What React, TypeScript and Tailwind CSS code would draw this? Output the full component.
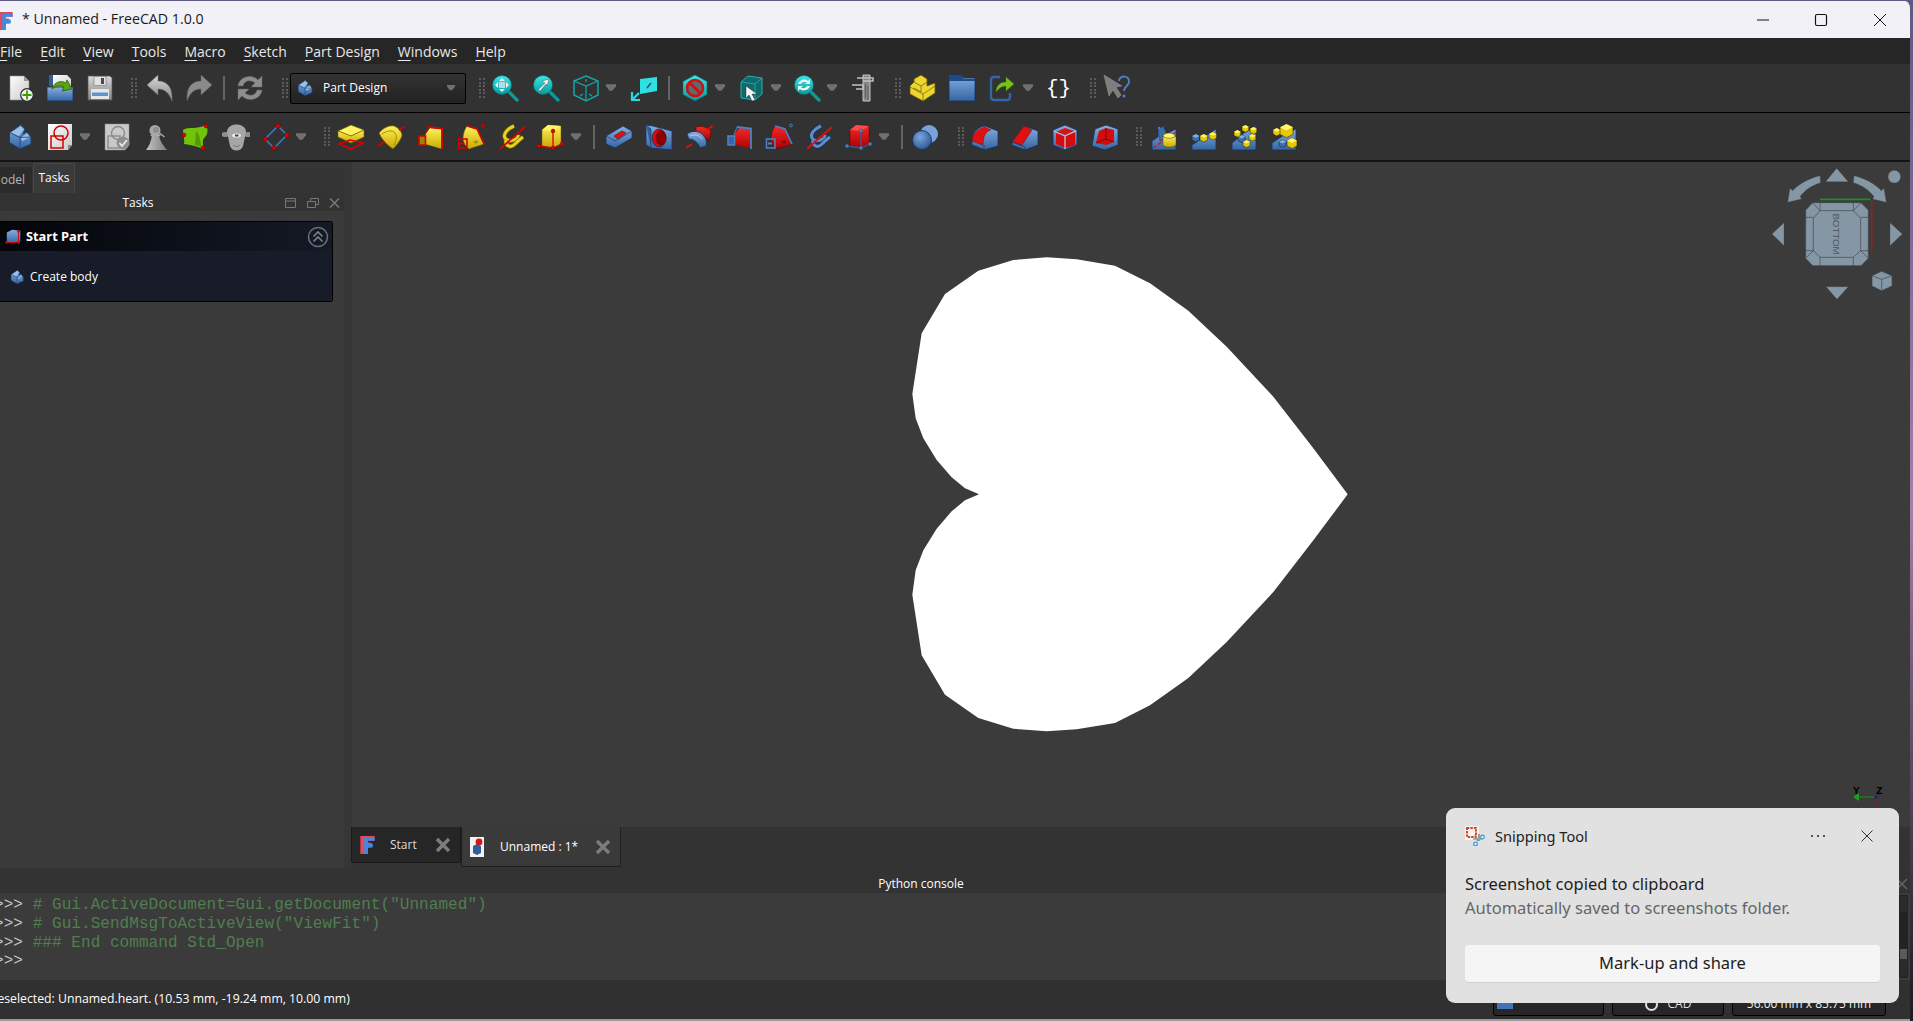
import React from "react";

const ui = { fontFamily: '"Open Sans", "Noto Sans", sans-serif' };

type IconProps = { className?: string; children?: React.ReactNode };

const Ico = ({ className = "", children }: IconProps) => (
  <svg viewBox="0 0 28 28" className={"h-7 w-7 shrink-0 " + className}>
    {children}
  </svg>
);

const Gradients = () => (
  <svg className="absolute h-0 w-0">
    <defs>
      <linearGradient id="gBlue" x1="0" y1="0" x2="0" y2="1">
        <stop offset="0" stopColor="#86aee0" />
        <stop offset="1" stopColor="#3465a4" />
      </linearGradient>
      <linearGradient id="gYellow" x1="0" y1="0" x2="0" y2="1">
        <stop offset="0" stopColor="#fff25c" />
        <stop offset="1" stopColor="#c9a800" />
      </linearGradient>
      <linearGradient id="gRed" x1="0" y1="0" x2="0" y2="1">
        <stop offset="0" stopColor="#f02a2a" />
        <stop offset="1" stopColor="#b00000" />
      </linearGradient>
      <linearGradient id="gPaper" x1="0" y1="0" x2="1" y2="1">
        <stop offset="0" stopColor="#ffffff" />
        <stop offset="1" stopColor="#c8c8c8" />
      </linearGradient>
      <linearGradient id="gGray" x1="0" y1="0" x2="0" y2="1">
        <stop offset="0" stopColor="#d8d8d8" />
        <stop offset="1" stopColor="#858585" />
      </linearGradient>
      <linearGradient id="gPawn" x1="0" y1="0" x2="1" y2="0">
        <stop offset="0" stopColor="#c4c4c4" />
        <stop offset="1" stopColor="#7c7c7c" />
      </linearGradient>
      <linearGradient id="gTeal" x1="0" y1="0" x2="0" y2="1">
        <stop offset="0" stopColor="#3fe6e8" />
        <stop offset="1" stopColor="#0a9a9c" />
      </linearGradient>
      <radialGradient id="gBall" cx="0.4" cy="0.35" r="0.7">
        <stop offset="0" stopColor="#7ba7de" />
        <stop offset="1" stopColor="#2a5590" />
      </radialGradient>
    </defs>
  </svg>
);

const pal = {
  y: { top: "#fff45e", main: "url(#gYellow)", side: "#c9a800", dark: "#6e5c00", line: "#d80000", inner: "#e9d21e" },
  r: { top: "#ff4a4a", main: "url(#gRed)", side: "#9c0000", dark: "#5c0000", line: "#4a80c4", inner: "#e02020" },
  b: { top: "#8ab2e4", main: "url(#gBlue)", side: "#3465a4", dark: "#16305a", line: "#e01010", inner: "#5c8ecb" },
};
type V = { v?: "y" | "r" | "b" };

const Grip = ({ className = "" }: IconProps) => (
  <div className={"grid h-[20px] w-[6px] shrink-0 grid-cols-2 content-between gap-x-[2px] " + className}>
    {Array.from({ length: 12 }).map((_, i) => (
      <div key={i} className="h-[2px] w-[2px] bg-[#5a5a5a]" />
    ))}
  </div>
);

const Sep = ({ className = "" }: IconProps) => <div className={"h-[24px] w-[2px] shrink-0 bg-[#636363] " + className} />;

const Drop = ({ className = "" }: IconProps) => (
  <svg viewBox="0 0 11 8" className={"h-2 w-[10px] shrink-0 " + className}>
    <path d="M0 0H11V2L7 7H4L0 2Z" fill="#707070" />
  </svg>
);

const NewDoc = ({ className }: IconProps) => (
  <Ico className={className}>
    <path d="M3 2H17L22 7V26H3Z" fill="url(#gPaper)" stroke="#8a8a8a" strokeWidth=".6" />
    <path d="M17 2V7H22Z" fill="#9a9a9a" />
    <circle cx="20" cy="21" r="6.3" fill="#f4f4f4" stroke="#2b2b2b" strokeWidth="1.2" />
    <path d="M20 16.5V25.5M15.5 21H24.5" stroke="#3c9a06" strokeWidth="1.8" />
  </Ico>
);

const OpenDoc = ({ className }: IconProps) => (
  <Ico className={className}>
    <path d="M3 1H8V12H3Z" fill="#2f5e9c" />
    <path d="M7 1H21L25 5V15H7Z" fill="url(#gPaper)" />
    <path d="M1 13H27V27H1Z" fill="url(#gBlue)" stroke="#18365f" strokeWidth=".8" />
    <path d="M6 15C8 8 15 6 20 9L21 6L26 15L16 17L18 13C14 11 10 12 6 15Z" fill="#5aa612" stroke="#2c5c05" strokeWidth=".8" />
  </Ico>
);

const Save = ({ className }: IconProps) => (
  <Ico className={className}>
    <path d="M2 2H24L26 4V26H2Z" fill="url(#gGray)" stroke="#5a5a5a" strokeWidth=".7" />
    <rect x="8" y="2.5" width="12" height="9" fill="#e2e2e2" stroke="#666" strokeWidth=".5" />
    <rect x="15" y="4" width="3" height="6" fill="#4a4a4a" />
    <rect x="5" y="15" width="18" height="10" fill="#e6e6e6" />
    <rect x="6" y="18.5" width="16" height="3.5" fill="#5f93cc" />
  </Ico>
);

const Undo = ({ className }: IconProps) => (
  <Ico className={className}>
    <path d="M1 11L12 1V7C21 7 27 13 26 27C23 19 19 15 12 15V21Z" fill="url(#gGray)" stroke="#6f6f6f" strokeWidth=".5" />
  </Ico>
);

const Redo = ({ className }: IconProps) => (
  <Ico className={className}>
    <path d="M27 11L16 1V7C7 7 1 13 2 27C5 19 9 15 16 15V21Z" fill="#8a8a8a" stroke="#5f5f5f" strokeWidth=".5" />
  </Ico>
);

const Refresh = ({ className }: IconProps) => (
  <Ico className={className}>
    <path d="M2 12C3 3 15 -1 22 6L26 2V13H15L19 9C14 5 8 7 7 12Z" fill="#8d8d8d" stroke="#666" strokeWidth=".5" />
    <path d="M26 16C25 25 13 29 6 22L2 26V15H13L9 19C14 23 20 21 21 16Z" fill="#8d8d8d" stroke="#666" strokeWidth=".5" />
  </Ico>
);

const Body = ({ className }: IconProps) => (
  <Ico className={className}>
    <path d="M3.5 9.5L9 6L14.5 2L19 6L17 11L21 9L25 14V21L14 26L3.5 19.5Z" fill="url(#gBlue)" stroke="#1c3f70" strokeWidth="1" />
    <path d="M5 9.5L14.5 3.5L17.5 6.5L13 13Z" fill="#9cc0ea" />
    <path d="M14.5 15L21 10.5L24 14L16.5 18Z" fill="#9cc0ea" />
    <path d="M3.5 9.5L14 14.5V26M14 14.5L17 11M14 14.5L25 14" fill="none" stroke="#1c3f70" strokeWidth=".8" />
  </Ico>
);

const Sketch = ({ className }: IconProps) => (
  <Ico className={className}>
    <path d="M2 1H26V22L22 27H2Z" fill="url(#gPaper)" />
    <path d="M26 22H22V27Z" fill="#8a8a8a" />
    <rect x="5" y="13" width="12" height="12" fill="none" stroke="#d40000" strokeWidth="1.5" />
    <circle cx="15" cy="10" r="7" fill="none" stroke="#d40000" strokeWidth="1.5" />
  </Ico>
);

const Attach = ({ className }: IconProps) => (
  <Ico className={className}>
    <path d="M2 1H26V22L22 27H2Z" fill="#c9c9c9" stroke="#8f8f8f" strokeWidth=".5" />
    <rect x="5" y="13" width="12" height="12" fill="none" stroke="#8b8b8b" strokeWidth="1.4" />
    <circle cx="15" cy="10" r="6.5" fill="none" stroke="#8b8b8b" strokeWidth="1.4" />
    <circle cx="20" cy="20" r="6.5" fill="#8f8f8f" />
    <path d="M16.5 20L19 23L24 17" fill="none" stroke="#efefef" strokeWidth="1.6" />
  </Ico>
);

const Pawn = ({ className }: IconProps) => (
  <Ico className={className}>
    <path d="M11 12H18C19 19 23 23 26 27H5C8 23 10 19 11 12Z" fill="url(#gPawn)" />
    <rect x="9.5" y="11.5" width="10" height="1.8" rx=".8" fill="#b0b0b0" />
    <circle cx="14" cy="7.5" r="5.5" fill="#a8a8a8" />
    <circle cx="15" cy="7" r="3" fill="#8e8e8e" />
    <path d="M18.5 10L23.5 14" stroke="#a8a8a8" strokeWidth="1.6" />
  </Ico>
);

const GreenFace = ({ className }: IconProps) => (
  <Ico className={className}>
    <path d="M1 7C7 3 14 7 24 2C27 8 25 12 23 14C19 18 22 21 21 26C14 23 9 22 2 21C3 17 1 13 1 7Z" fill="#70c40c" />
    <path d="M14 8C19 12 17 20 21 25C18 23 15 22 13 22Z" fill="#549a08" />
    <circle cx="24" cy="3" r="2" fill="#e00000" stroke="#5c0000" strokeWidth=".4" />
    <circle cx="2" cy="12" r="2" fill="#e00000" stroke="#5c0000" strokeWidth=".4" />
    <circle cx="21" cy="25" r="2" fill="#e00000" stroke="#5c0000" strokeWidth=".4" />
  </Ico>
);

const Sheep = ({ className }: IconProps) => (
  <Ico className={className}>
    <ellipse cx="3" cy="11.5" rx="3.5" ry="2.6" fill="#8f8f8f" />
    <ellipse cx="26" cy="11.5" rx="3.5" ry="2.6" fill="#8f8f8f" />
    <path d="M5 9C5 -1 24 -1 24 9L21 23C19 29 10 29 8 23Z" fill="#a6a6a6" />
    <ellipse cx="14.5" cy="12.5" rx="4.5" ry="2" fill="#ececec" />
    <rect x="13" y="11.5" width="3.5" height="2" fill="#444" />
    <path d="M11 22C13 24 16 24 18 22" fill="none" stroke="#767676" />
  </Ico>
);

const Diamond = ({ className }: IconProps) => (
  <Ico className={className}>
    <path d="M17 3L26 12L13 25L4 16Z" fill="none" stroke="#3f74b5" strokeWidth="1.6" />
    {[[17, 3], [26, 12], [13, 25], [4, 16]].map(([x, y]) => (
      <circle key={x} cx={x} cy={y} r="2.2" fill="#e00000" stroke="#5c0000" strokeWidth=".4" />
    ))}
  </Ico>
);

const PadIco = ({ className }: IconProps) => (
  <Ico className={className}>
    <path d="M1 8L14 2L27 7L14 13Z" fill="#fff45e" stroke="#6e5c00" strokeWidth=".6" />
    <path d="M1 8L14 13L27 7V14L14 20L1 14Z" fill="url(#gYellow)" stroke="#6e5c00" strokeWidth=".6" />
    <path d="M2 21L13 17L26 20L14 26Z" fill="none" stroke="#d80000" strokeWidth="1.6" />
  </Ico>
);

const Revolve = ({ className }: IconProps) => (
  <Ico className={className}>
    <path d="M2 10C6 5 12 2 17 3C22 5 25 9 25 13C23 18 20 22 16 26C10 22 5 17 2 10Z" fill="url(#gYellow)" stroke="#6e5c00" strokeWidth=".7" />
    <path d="M5 11C9 8 14 7 17 9C20 11 20 17 17 22" fill="none" stroke="#a88f00" strokeWidth="1" />
    <path d="M1 23L7.5 18.5M22 7L27.5 3.5" stroke="#d80000" strokeWidth="1.6" />
  </Ico>
);

const Groove = ({ className }: IconProps) => (
  <Ico className={className}>
    <path d="M11 4C16 2 22 4 26 8C26 12 25 15 23 18C20 13 16 11 11 10Z" fill="url(#gRed)" stroke="#5c0000" strokeWidth=".6" />
    <path d="M2 11C8 7 14 8 18 12C21 15 22 19 21 23L15 25C13 19 8 16 4 16Z" fill="url(#gBlue)" stroke="#16305a" strokeWidth=".7" />
    <path d="M5 13C10 11 14 12 17 16" fill="none" stroke="#b8d0ee" strokeWidth="1" />
    <path d="M1 25L7 21M22 7L27.5 3" stroke="#e01010" strokeWidth="1.6" />
  </Ico>
);

const Loft = ({ className, v = "y" }: IconProps & V) => {
  const p = pal[v];
  return (
    <Ico className={className}>
      <path d="M8 12L13 5L25 6V26L8 21Z" fill={p.main} />
      <path d="M11 4L25 5.5V26" fill="none" stroke={p.line} strokeWidth="1.8" />
      <rect x="2" y="13" width="6.5" height="9" fill={v === "y" ? "#9a8400" : "#3465a4"} stroke={p.line} strokeWidth="1.6" />
      <path d="M11 4L8 12" stroke={p.line} strokeWidth="1" />
    </Ico>
  );
};

const Pipe = ({ className, v = "y" }: IconProps & V) => {
  const p = pal[v];
  return (
    <Ico className={className}>
      <path d="M6 17C6 10 8 6 10 3L20 6L27 21L12 26L8 22Z" fill={p.main} stroke={p.dark} strokeWidth=".5" />
      <path d="M10 3L20 6L27 21" fill="none" stroke={p.line} strokeWidth="1.7" />
      <rect x="1.5" y="16" width="8.5" height="9" fill="none" stroke={p.line} strokeWidth="1.6" />
      <rect x="3" y="19.5" width="4" height="2" fill={p.line} />
      <circle cx="26" cy="2.5" r="1.4" fill="none" stroke={p.line} />
      <ellipse cx="19" cy="19" rx="2.4" ry="1.4" fill={p.dark} opacity=".45" />
    </Ico>
  );
};

const Helix = ({ className, v = "y" }: IconProps & V) => {
  const p = pal[v];
  return (
    <Ico className={className}>
      <path d="M16 3C9 6 5 11 7 15C10 20 21 17 20 12" fill="none" stroke={p.dark} strokeWidth="4.5" />
      <path d="M16 3C9 6 5 11 7 15C10 20 21 17 20 12" fill="none" stroke={p.inner} strokeWidth="3" />
      <path d="M8 17C7 22 12 26 17 21C20 18 22 16 25 14" fill="none" stroke={p.dark} strokeWidth="4.5" />
      <path d="M8 17C7 22 12 26 17 21C20 18 22 16 25 14" fill="none" stroke={p.inner} strokeWidth="3" />
      <path d="M2 26L27 4" stroke={v === "y" ? "#d80000" : "#e01010"} strokeWidth="1.7" />
    </Ico>
  );
};

const Prim = ({ className, v = "y" }: IconProps & V) => {
  const p = pal[v];
  const dot = v === "y" ? "#e00000" : "#4a80c4";
  return (
    <Ico className={className}>
      <path d="M5 7L11 2L24 3L24 21L16 25L5 23Z" fill={p.main} stroke={p.dark} strokeWidth=".5" />
      <path d="M5 7L11 2L24 3L16 8Z" fill={p.top} />
      <path d="M16 8V25M2 23L16 25L25 21" fill="none" stroke={v === "y" ? "#d80000" : "#2f5e9c"} strokeWidth="1.3" />
      {[[16, 8], [2, 23], [16, 25], [25, 21]].map(([x, y], i) => (
        <circle key={i} cx={x} cy={y} r="2" fill={dot} stroke="#3a0000" strokeWidth=".3" />
      ))}
    </Ico>
  );
};

const Pocket = ({ className }: IconProps) => (
  <Ico className={className}>
    <path d="M1 13L18 3L27 8L27 15L10 25L1 21Z" fill="url(#gBlue)" stroke="#16305a" strokeWidth=".8" />
    <path d="M1 13L10 18L27 8" fill="none" stroke="#16305a" strokeWidth=".6" />
    <path d="M9 13L17 8L21 10L13 16Z" fill="#e01010" stroke="#5c0000" strokeWidth=".5" />
  </Ico>
);

const Hole = ({ className }: IconProps) => (
  <Ico className={className}>
    <path d="M1 2L8 3L27 8V27L6 25L1 22Z" fill="url(#gBlue)" stroke="#16305a" strokeWidth=".8" />
    <path d="M1 2L6 6V25" fill="#2f5e9c" stroke="#16305a" strokeWidth=".6" />
    <ellipse cx="14" cy="15" rx="7" ry="9" fill="#d01010" stroke="#16305a" strokeWidth=".8" />
    <ellipse cx="16" cy="15" rx="5.5" ry="7.5" fill="#8c0000" />
  </Ico>
);

const Boolean = ({ className }: IconProps) => (
  <Ico className={className}>
    <circle cx="18" cy="11" r="9" fill="#79a3da" />
    <circle cx="11" cy="17" r="9.5" fill="url(#gBall)" stroke="#16305a" strokeWidth=".8" />
  </Ico>
);

const Fillet = ({ className }: IconProps) => (
  <Ico className={className}>
    <path d="M1 17C1 8 10 3 14 3L27 8V23L13 27L1 22Z" fill="url(#gBlue)" stroke="#16305a" strokeWidth=".8" />
    <path d="M1 18C1 10 9 5 14 4L20 7C15 8 12 13 12 22Z" fill="#e01010" stroke="#5c0000" strokeWidth=".4" />
    <path d="M1 22L13 27M13 22V27" stroke="#16305a" strokeWidth=".7" />
  </Ico>
);

const Chamfer = ({ className }: IconProps) => (
  <Ico className={className}>
    <path d="M1 19L13 3L27 8V22L14 27L1 22Z" fill="url(#gBlue)" stroke="#16305a" strokeWidth=".8" />
    <path d="M1 19L13 3L21 7L11 22Z" fill="#e01010" stroke="#5c0000" strokeWidth=".4" />
    <path d="M1 19L14 24V27" fill="none" stroke="#16305a" strokeWidth=".7" />
  </Ico>
);

const Draft = ({ className }: IconProps) => (
  <Ico className={className}>
    <path d="M2 7L14 2L26 7V22L14 27L2 22Z" fill="url(#gBlue)" stroke="#16305a" strokeWidth=".8" />
    <path d="M5 10L14 13L24 9V22L14 25L5 21Z" fill="#d40c0c" />
    <path d="M5 9L14 5L23 8L14 12Z" fill="#e01010" />
    <path d="M14 13V26" stroke="#b8d0ee" strokeWidth="1.2" />
    <path d="M3 8L14 13L25 8" fill="none" stroke="#b8d0ee" strokeWidth="1" />
  </Ico>
);

const Thick = ({ className }: IconProps) => (
  <Ico className={className}>
    <path d="M4 6L15 2L27 6V22L14 27L1 23Z" fill="url(#gBlue)" stroke="#16305a" strokeWidth=".8" />
    <path d="M8 8L15 5L23 7V19L15 22L5 20Z" fill="#d40c0c" />
    <path d="M15 5V16L5 20M15 16L23 19" fill="none" stroke="#5c0000" strokeWidth=".7" />
  </Ico>
);

const Cube = ({ x, y, s = 6, c = "y" }: { x: number; y: number; s?: number; c?: "y" | "b" }) => (
  <g>
    <path
      d={`M${x} ${y + s / 2}L${x + s} ${y}L${x + 2 * s} ${y + s / 2}V${y + 1.6 * s}L${x + s} ${y + 2.1 * s}L${x} ${y + 1.6 * s}Z`}
      fill={c === "y" ? "#e6c800" : "#3a6cae"}
      stroke="#1c1c10"
      strokeWidth=".5"
    />
    <path d={`M${x} ${y + s / 2}L${x + s} ${y}L${x + 2 * s} ${y + s / 2}L${x + s} ${y + s}Z`} fill={c === "y" ? "#fff568" : "#86aee0"} />
  </g>
);

const Base = () => <path d="M2 22L14 14L26 6V27H2Z" fill="url(#gBlue)" stroke="#16305a" strokeWidth=".8" />;

const Mirror = ({ className }: IconProps) => (
  <Ico className={className}>
    <path d="M2 18L8 14V3L14 7L16 11L26 6V27H2Z" fill="url(#gBlue)" stroke="#16305a" strokeWidth=".8" />
    <path d="M8 7L13 3L16 9V15L10 18Z" fill="#3a6cae" stroke="#16305a" strokeWidth=".5" />
    <path d="M3 25L26 9" stroke="#e01010" strokeWidth="1.4" strokeDasharray="4 2" />
    <ellipse cx="19" cy="13" rx="6" ry="3" fill="#fff568" stroke="#4a3f00" strokeWidth=".5" />
    <path d="M13 13V22C15 25 23 25 26 22V13C23 16 15 16 13 13Z" fill="url(#gYellow)" stroke="#4a3f00" strokeWidth=".5" />
  </Ico>
);

const Linear = ({ className }: IconProps) => (
  <Ico className={className}>
    <Base />
    <Cube x={2} y={11} s={3.8} c="b" />
    <Cube x={10} y={11} s={3.8} />
    <Cube x={19} y={9} s={3.8} />
  </Ico>
);

const Polar = ({ className }: IconProps) => (
  <Ico className={className}>
    <path d="M2 20L14 10L26 3V27H2Z" fill="url(#gBlue)" stroke="#16305a" strokeWidth=".8" />
    <Cube x={8} y={12} s={3.6} c="b" />
    <Cube x={4} y={7} s={3.4} />
    <Cube x={12} y={2} s={3.4} />
    <Cube x={20} y={4} s={3.4} />
    <Cube x={19} y={11} s={3.4} />
    <Cube x={13} y={17} s={3.6} />
  </Ico>
);

const Multi = ({ className }: IconProps) => (
  <Ico className={className}>
    <path d="M2 20L14 12L26 6V27H2Z" fill="url(#gBlue)" stroke="#16305a" strokeWidth=".8" />
    <Cube x={3} y={5} s={3.8} />
    <Cube x={10} y={1} s={6.5} />
    <Cube x={9} y={17} s={3.6} c="b" />
    <Cube x={17} y={15} s={5} />
  </Ico>
);

const Glass = ({ children, className }: IconProps) => (
  <Ico className={className}>
    <path d="M17 17L26 26" stroke="#0a9a9c" strokeWidth="3.2" strokeLinecap="round" />
    <circle cx="11" cy="11" r="9.5" fill="url(#gTeal)" stroke="#0f6a6c" strokeWidth=".6" />
    {children}
  </Ico>
);

const WireCube = ({ className }: IconProps) => (
  <Ico className={className}>
    <path d="M14 2L26 7V21L14 27L2 21V7Z" fill="none" stroke="#12a7a9" strokeWidth="1.5" />
    <path d="M2 7L14 12L26 7M14 12V27" fill="none" stroke="#12a7a9" strokeWidth="1.2" />
    <path d="M14 5V8M8 22L11 20M20 22L17 20" stroke="#12a7a9" strokeWidth="1.2" />
  </Ico>
);

const ViewIco = ({ className }: IconProps) => (
  <Ico className={className}>
    <path d="M10 5L27 3V17L10 20Z" fill="#2fe0e2" />
    <path d="M17 14L21 9" stroke="#25505a" strokeWidth="1.4" />
    <path d="M9 19L3 25M2 18V26H10" fill="none" stroke="#2fd8da" strokeWidth="2.2" />
  </Ico>
);

const DrawStyle = ({ className }: IconProps) => (
  <Ico className={className}>
    <path d="M14 1L26 7.5V20.5L14 27L2 20.5V7.5Z" fill="url(#gTeal)" stroke="#0f6a6c" strokeWidth=".6" />
    <circle cx="14" cy="14" r="8" fill="#606a6c" stroke="#d01010" strokeWidth="2.6" />
    <path d="M8.5 8.5L19.5 19.5" stroke="#d01010" strokeWidth="2.6" />
  </Ico>
);

const SelCube = ({ className }: IconProps) => (
  <Ico className={className}>
    <path d="M4 8L11 2L25 4V20L18 26L4 24Z" fill="#0f6a6c" stroke="#1fb6b8" strokeWidth="1" />
    <path d="M4 8L18 10L25 4M18 10V26" fill="none" stroke="#1fb6b8" strokeWidth=".8" />
    <path d="M9 12L20 20L15 20L18 26L15 27L12 21L9 24Z" fill="#f4f4f4" stroke="#222" strokeWidth=".4" />
  </Ico>
);

const Caliper = ({ className }: IconProps) => (
  <Ico className={className}>
    <path d="M14 1H21V27H14Z" fill="#858585" stroke="#c4c4c4" strokeWidth="1" />
    <path d="M8 4H24V7H14M3 11H14V15H7" fill="none" stroke="#c0c0c0" strokeWidth="1.5" />
    <path d="M16.5 10V24M19 12V26" stroke="#565656" strokeWidth=".8" />
  </Ico>
);

const YellowPart = ({ className }: IconProps) => (
  <Ico className={className}>
    <path d="M2 12L6 8V5L13 1L19 5V12L27 9V19L15 27L2 20Z" fill="#ecd632" stroke="#6e5c00" strokeWidth=".8" />
    <path d="M6 8L13 12L19 8M13 12V18L6 14M2 13L15 20V27M15 20L27 12" fill="none" stroke="#6e5c00" strokeWidth=".7" />
  </Ico>
);

const Folder = ({ className }: IconProps) => (
  <Ico className={className}>
    <path d="M1 1H13L16 4H27V27H1Z" fill="url(#gBlue)" stroke="#16305a" strokeWidth=".8" />
    <path d="M1 1H13L16 5H27V7H1Z" fill="#1f4a88" />
  </Ico>
);

const LinkIco = ({ className }: IconProps) => (
  <Ico className={className}>
    <path d="M12 3H6C4 3 3 4 3 6V23C3 25 4 26 6 26H19C21 26 22 25 22 23V19" fill="none" stroke="#3465a4" strokeWidth="2.4" />
    <path d="M8 18C8 11 13 8 18 8V3L26 10L18 17V12C14 12 11 14 8 18Z" fill="#76c41a" stroke="#3c7a06" strokeWidth=".5" />
  </Ico>
);

const Whats = ({ className }: IconProps) => (
  <Ico className={className}>
    <path d="M1 1L6 22L10 16L15 24L18 21L13 13L19 12Z" fill="#7e7e7e" stroke="#9a9a9a" strokeWidth=".5" />
    <path d="M16 7C16 1 27 1 26 8C26 12 21 12 21 17" fill="none" stroke="#4a80c4" strokeWidth="2" />
    <circle cx="21" cy="22" r="1.5" fill="#4a80c4" />
  </Ico>
);

const Logo = ({ className = "" }: IconProps) => (
  <svg viewBox="0 0 17 21" className={className}>
    <path d="M1 1H16V6H8V8H12V13H8V20H1Z" fill="#e8465a" />
    <path d="M5 3H16V6H9V9H14V13H9V20H5Z" fill="#3e8ce0" />
  </svg>
);

const MenuItem = ({ first, rest, className = "" }: { first: string; rest: string; className?: string }) => (
  <span className={"shrink-0 text-[#e8e8e8] " + className}>
    <span className="underline decoration-1 underline-offset-[3px]">{first}</span>
    {rest}
  </span>
);

const TabX = () => (
  <svg viewBox="0 0 16 16" className="h-4 w-4 shrink-0">
    <path d="M2 2L14 14M14 2L2 14" stroke="#7c7c7c" strokeWidth="3.4" />
  </svg>
);

const top = [
  [1403, 763], [1300, 625], [1180, 470], [1040, 320], [925, 212], [810, 130], [705, 77], [590, 58], [500, 52], [400, 60],
  [295, 92], [195, 162], [125, 280], [97, 462], [107, 535], [130, 595], [170, 660], [215, 712], [255, 745], [297, 763],
];
const heart = [...top, ...[...top].reverse().slice(1, -1).map(([x, y]) => [x, 1526 - y])].map((p) => p.join(",")).join(" ");

const NavCube = () => (
  <svg viewBox="90 495 405 405" className="absolute left-[1418px] top-[3px] h-[135px] w-[135px]">
    <g fill="#8597a4" stroke="#3d464d" strokeWidth="1">
      <polygon points="290,505 257,545 325,545" />
      <polygon points="258,860 325,860 291,898" />
      <polygon points="132,668 96,702 132,737" />
      <polygon points="450,668 487,702 450,737" />
      <circle cx="463" cy="530" r="19" />
      <path d="M240 527L242 548C215 556 195 570 180 590L185 597L143 607L150 565L158 572C178 550 208 535 240 527Z" />
      <path d="M342 527L340 548C367 556 387 570 402 590L397 597L439 607L432 565L424 572C404 550 374 535 342 527Z" />
      <polygon points="218,608 363,608 385,630 385,775 363,797 218,797 197,775 197,630" strokeWidth="2" />
      <polygon points="240,632 340,632 362,655 362,752 340,772 240,772 220,752 220,655" strokeWidth="2" />
      <path
        d="M240 608V632M340 608V632M197 652H220M362 652H385M197 752H220M362 752H385M240 772V797M340 772V797M218 608L240 632M363 608L340 632M197 775L220 752M385 775L362 752"
        fill="none"
        strokeWidth="2"
      />
      <polygon points="425,814 456,827 456,858 425,872 396,858 396,827" strokeWidth="2" />
      <path d="M396 827L425 838L456 827M425 838V872" fill="none" strokeWidth="2" />
    </g>
    <text
      x="290"
      y="702"
      transform="rotate(90 290 702)"
      textAnchor="middle"
      dominantBaseline="central"
      fontSize="29"
      fill="#4f5b65"
      fontFamily='"Liberation Sans", sans-serif'
    >
      BOTTOM
    </text>
    <path d="M240 598H392" stroke="#1f8f1f" strokeWidth="5" />
    <path d="M395 600V752" stroke="#8f2222" strokeWidth="5" />
    <circle cx="395" cy="597" r="3" fill="#1a2a80" />
  </svg>
);

const Axis = () => (
  <div className="absolute left-[1501px] top-[624px] h-[41px] w-[40px]">
    <span className="absolute left-[0px] top-0 text-[11px] leading-none font-bold text-black" style={{ fontFamily: '"Liberation Mono", monospace' }}>
      Y
    </span>
    <span className="absolute left-[23px] top-0 text-[11px] leading-none font-bold text-black" style={{ fontFamily: '"Liberation Mono", monospace' }}>
      Z
    </span>
    <svg viewBox="0 0 40 41" className="absolute inset-0 h-full w-full">
      <path d="M3 11H23" stroke="#1f7f1f" strokeWidth="1.4" />
      <path d="M0 11L6 7V15Z" fill="#1f9f1f" />
      <path d="M23 12V41" stroke="#7f1f1f" strokeWidth="1.4" />
      <circle cx="23" cy="11" r="1.6" fill="#1a1a90" />
    </svg>
  </div>
);

const Toast = () => (
  <div
    className="absolute left-[1446px] top-[808px] z-10 flex h-[195px] w-[453px] flex-col rounded-[9px] bg-[#e1e1e1] px-[19px]"
    style={{ fontFamily: '"Noto Sans", "Open Sans", sans-serif' }}
  >
    <div className="mt-[19px] flex h-[18px] items-center">
      <svg viewBox="0 0 20 20" className="h-5 w-5 shrink-0">
        <rect x="0" y="0" width="14" height="14" fill="#f4f4f4" />
        <rect x="2" y="2" width="9" height="9" fill="none" stroke="#d8451c" strokeWidth="2" strokeDasharray="2.4 1" />
        <path d="M10 9L13 15M14 8V15" stroke="#8a8a8a" strokeWidth="1.6" />
        <path d="M8 13L17 13" stroke="#9aa0a6" strokeWidth="1.6" />
        <circle cx="17.5" cy="11" r="1.8" fill="#e8f4fc" stroke="#2b9ad8" strokeWidth="1.2" />
        <circle cx="10.5" cy="18" r="1.8" fill="#e8f4fc" stroke="#2b9ad8" strokeWidth="1.2" />
      </svg>
      <span className="ml-[10px] text-[14.6px] leading-none text-[#222]">Snipping Tool</span>
      <svg viewBox="0 0 14 2" className="ml-auto h-[2px] w-[14px] shrink-0">
        <path d="M0 0H2V2H0ZM6 0H8V2H6ZM12 0H14V2H12Z" fill="#555" />
      </svg>
      <svg viewBox="0 0 12 12" className="ml-[36px] mr-[7px] h-3 w-3 shrink-0">
        <path d="M.5.5L11.5 11.5M11.5.5L.5 11.5" stroke="#333" strokeWidth="1" />
      </svg>
    </div>
    <div className="mt-[27px] text-[16.5px] leading-[24px] whitespace-nowrap text-[#1c1c1c]">Screenshot copied to clipboard</div>
    <div className="text-[16.5px] leading-[24px] whitespace-nowrap text-[#666]">Automatically saved to screenshots folder.</div>
    <div className="mt-[25px] flex h-[38px] items-center justify-center rounded-[4px] border-b border-[#cfcfcf] bg-[#f5f5f5] text-[16.5px] text-[#1c1c1c]">
      Mark-up and share
    </div>
  </div>
);

export default function App() {
  return (
    <div className="relative flex h-[1021px] w-[1913px] overflow-hidden bg-gradient-to-b from-[#5d5a82] via-[#a57ea8] to-[#1c1a22] text-[12px]" style={ui}>
      <Gradients />
      <div className="flex h-full w-[1910px] flex-col overflow-hidden rounded-tr-[8px]">
        <div className="h-px shrink-0 bg-[#5d5a82]" />
        {/* title bar */}
        <div className="flex h-[37px] shrink-0 items-center bg-[#f3f1f8] text-[#1a1a1a]">
          <Logo className="mt-[2px] -ml-[3px] h-[20px] w-[17px] shrink-0" />
          <span className="ml-[8px] text-[14.2px] leading-none">* Unnamed - FreeCAD 1.0.0</span>
          <svg viewBox="0 0 153 14" className="ml-auto mr-[24px] h-[14px] w-[153px] shrink-0">
            <path d="M24 7H36" stroke="#111" strokeWidth="1" fill="none" />
            <rect x="82.5" y="1.5" width="11" height="11" rx="1.5" stroke="#111" strokeWidth="1.2" fill="none" />
            <path d="M141 1L153 13M153 1L141 13" stroke="#111" strokeWidth="1" fill="none" />
          </svg>
        </div>
        {/* menu */}
        <div className="flex h-[26px] shrink-0 items-center gap-[18px] bg-[#262626] pt-[2px] text-[14px] leading-none">
          <MenuItem first="F" rest="ile" />
          <MenuItem first="E" rest="dit" />
          <MenuItem first="V" rest="iew" />
          <MenuItem first="T" rest="ools" />
          <MenuItem first="M" rest="acro" />
          <MenuItem first="S" rest="ketch" />
          <MenuItem first="P" rest="art Design" />
          <MenuItem first="W" rest="indows" />
          <MenuItem first="H" rest="elp" />
        </div>
        {/* first toolbar */}
        <div className="flex h-[48px] shrink-0 items-center bg-[#323232]">
          <NewDoc className="ml-[7px]" />
          <OpenDoc className="ml-[11px]" />
          <Save className="ml-[12px]" />
          <Grip className="ml-[17px]" />
          <Undo className="ml-[9px]" />
          <Redo className="ml-[11px]" />
          <Sep className="ml-[10px]" />
          <Refresh className="ml-[11px]" />
          <Grip className="ml-[18px]" />
          <div className="ml-[2px] flex h-[31px] w-[176px] shrink-0 items-center rounded-[2px] border border-black bg-gradient-to-b from-[#333333] to-[#222222]">
            <Body className="ml-[5px] !h-[18px] !w-[18px]" />
            <span className="ml-[9px] text-[12px] text-white">Part Design</span>
            <Drop className="ml-auto mr-[10px] !h-[6px] !w-[8px]" />
          </div>
          <Grip className="ml-[13px]" />
          <Glass className="ml-[6px]">
            <path d="M11 4L14 7H8ZM11 18L14 15H8ZM4 11L7 8V14ZM18 11L15 8V14Z" fill="#e8f4f6" />
            <rect x="8" y="8" width="6" height="6" fill="#b8dce0" />
          </Glass>
          <Glass className="ml-[13px]">
            <path d="M6 16L13 9L10 7L17 5L15 12L14 10L8 17Z" fill="#f4f4f4" stroke="#444" strokeWidth=".4" />
          </Glass>
          <WireCube className="ml-[12px]" />
          <Drop className="ml-[6px]" />
          <ViewIco className="ml-[14px]" />
          <Sep className="ml-[10px]" />
          <DrawStyle className="ml-[11px]" />
          <Drop className="ml-[6px]" />
          <SelCube className="ml-[12px]" />
          <Drop className="ml-[6px]" />
          <Glass className="ml-[12px]">
            <path d="M5 10C6 6 12 4 15 7L17 5V10H12L14 8.5C12 7 9 8 8 10ZM17 12C16 16 10 18 7 15L5 17V12H10L8 13.5C10 15 13 14 14 12Z" fill="#f0f4f4" />
          </Glass>
          <Drop className="ml-[6px]" />
          <Caliper className="ml-[12px]" />
          <Grip className="ml-[18px]" />
          <YellowPart className="ml-[7px]" />
          <Folder className="ml-[12px]" />
          <LinkIco className="ml-[12px]" />
          <Drop className="ml-[7px]" />
          <div className="ml-[13px] flex w-[24px] shrink-0 justify-between text-[21px] leading-none text-white" style={{ fontFamily: '"Liberation Mono", monospace' }}>
            <span>{"{"}</span>
            <span>{"}"}</span>
          </div>
          <Grip className="ml-[20px]" />
          <Whats className="ml-[7px]" />
        </div>
        <div className="h-px shrink-0 bg-black" />
        {/* second toolbar */}
        <div className="flex h-[47px] shrink-0 items-center bg-[#323232]">
          <Body className="ml-[6px]" />
          <Sketch className="ml-[12px]" />
          <Drop className="ml-[6px]" />
          <Attach className="ml-[13px]" />
          <Pawn className="ml-[10px]" />
          <GreenFace className="ml-[13px]" />
          <Sheep className="ml-[12px]" />
          <Diamond className="ml-[11px]" />
          <Drop className="ml-[7px]" />
          <Grip className="ml-[18px]" />
          <PadIco className="ml-[7px]" />
          <Revolve className="ml-[12px]" />
          <Loft className="ml-[12px]" />
          <Pipe className="ml-[12px]" />
          <Helix className="ml-[13px]" />
          <Prim className="ml-[11px]" />
          <Drop className="ml-[6px]" />
          <Sep className="ml-[12px]" />
          <Pocket className="ml-[10px]" />
          <Hole className="ml-[12px]" />
          <Groove className="ml-[12px]" />
          <Loft v="r" className="ml-[13px]" />
          <Pipe v="r" className="ml-[11px]" />
          <Helix v="b" className="ml-[12px]" />
          <Prim v="r" className="ml-[12px]" />
          <Drop className="ml-[6px]" />
          <Sep className="ml-[12px]" />
          <Boolean className="ml-[8px]" />
          <Grip className="ml-[19px]" />
          <Fillet className="ml-[7px]" />
          <Chamfer className="ml-[12px]" />
          <Draft className="ml-[12px]" />
          <Thick className="ml-[12px]" />
          <Grip className="ml-[17px]" />
          <Mirror className="ml-[8px]" />
          <Linear className="ml-[12px]" />
          <Polar className="ml-[12px]" />
          <Multi className="ml-[12px]" />
        </div>
        <div className="h-[2px] shrink-0 bg-[#141414]" />
        {/* main */}
        <div className="flex h-[706px] shrink-0 bg-[#333333]">
          <div className="flex w-[344px] shrink-0 flex-col overflow-hidden bg-[#3a3a3a]">
            <div className="flex h-[31px] shrink-0 items-end bg-[#353535]">
              <div className="-ml-[17px] flex h-[26px] w-[49px] items-center justify-center rounded-t-[2px] bg-[#2b2b2b] text-[#b5b5b5]">Model</div>
              <div className="ml-px flex h-[30px] w-[42px] items-center justify-center rounded-t-[2px] border-x border-t border-[#484848] bg-[#3a3a3a] pb-[2px] text-white">Tasks</div>
            </div>
            <div className="flex h-[18px] shrink-0 items-center bg-[#333333] pt-[2px]">
              <span className="w-[276px] shrink-0 text-center text-white">Tasks</span>
              <svg viewBox="0 0 56 12" className="ml-[9px] h-3 w-14 shrink-0">
                <path d="M.5 1.5H10.5V10.5H.5ZM.5 4H10.5" fill="none" stroke="#777" />
                <path d="M22.5 4.5H30.5V10.5H22.5ZM25.5 4.5V1.5H33.5V7.5H30.5" fill="none" stroke="#777" />
                <path d="M45 1.5L54 10.5M54 1.5L45 10.5" stroke="#777" strokeWidth="1.6" />
              </svg>
            </div>
            <div className="mt-[10px] flex h-[81px] w-[333px] shrink-0 flex-col overflow-hidden rounded-r-[3px] border-y border-r border-black">
              <div className="flex h-[29px] shrink-0 items-center bg-gradient-to-r from-[#05060a] to-[#141a26]">
                <svg viewBox="0 0 20 18" className="ml-[5px] h-[18px] w-[18px] shrink-0">
                  <path d="M2 4L8 1L17 2V14L8 16L2 15Z" fill="url(#gBlue)" />
                  <path d="M2 15H16M15 2V15" stroke="#d80000" strokeWidth="1" />
                  <circle cx="15" cy="3" r="1.6" fill="#e00000" />
                  <circle cx="2" cy="15" r="1.6" fill="#e00000" />
                  <circle cx="15" cy="15" r="1.6" fill="#e00000" />
                </svg>
                <span className="ml-[3px] pt-[1px] text-[12.8px] font-bold text-white">Start Part</span>
                <svg viewBox="0 0 22 22" className="ml-auto mr-[3px] h-[22px] w-[22px] shrink-0">
                  <circle cx="11" cy="11" r="9.5" fill="none" stroke="#6a6e76" strokeWidth="1.6" />
                  <path d="M6.5 10.5L11 6L15.5 10.5M6.5 15.5L11 11L15.5 15.5" fill="none" stroke="#7d8088" strokeWidth="1.6" />
                </svg>
              </div>
              <div className="flex flex-1 items-center bg-[#171c28] pt-[1px]">
                <Body className="ml-[9px] !h-4 !w-4" />
                <span className="ml-[5px] text-[12px] text-white">Create body</span>
              </div>
            </div>
          </div>
          <div className="w-[8px] shrink-0 bg-[#363636]" />
          <div className="flex min-w-0 flex-1 flex-col">
            <div className="relative h-[665px] shrink-0 bg-[#3b3b3b]">
              <svg viewBox="0 0 1440 1530" className="absolute left-[528px] top-[78px] h-[510px] w-[480px]">
                <polygon points={heart} fill="#ffffff" />
              </svg>
              <NavCube />
              <Axis />
            </div>
            <div className="flex h-[41px] shrink-0 items-start">
              <div className="-ml-px flex h-[36px] w-[110px] shrink-0 items-center rounded-b-[2px] border border-t-0 border-[#191919] bg-[#262626] pt-[1px] pr-[9px]">
                <Logo className="ml-[7px] h-[20px] w-[17px] shrink-0" />
                <span className="ml-[14px] text-[#dcdcdc]">Start</span>
                <span className="ml-auto">
                  <TabX />
                </span>
              </div>
              <div className="flex h-[40px] w-[160px] shrink-0 items-center rounded-b-[2px] border border-t-0 border-[#1f1f1f] bg-[#3a3a3a] pt-[1px] pr-[9px]">
                <svg viewBox="0 0 14 20" className="ml-[8px] h-[20px] w-[14px] shrink-0">
                  <path d="M0 0H14V20H0Z" fill="#f2f2f2" />
                  <path d="M3 9L7 7L11 9V16L7 18L3 16Z" fill="#2f5e9c" />
                  <circle cx="9" cy="5" r="3.4" fill="#d01818" />
                </svg>
                <span className="ml-[16px] text-white">Unnamed : 1*</span>
                <span className="ml-auto">
                  <TabX />
                </span>
              </div>
            </div>
          </div>
        </div>
        {/* python console */}
        <div className="flex h-[25px] shrink-0 items-center justify-center bg-[#333333] pt-[6px] pr-[68px] text-white">Python console</div>
        <div className="h-[87px] shrink-0 overflow-hidden bg-[#3b3b3b] pt-[3px] text-[16px] leading-[18.8px] tracking-[0.06px] text-[#4f7f4f]" style={{ fontFamily: '"Liberation Mono", monospace' }}>
          {[
            '# Gui.ActiveDocument=Gui.getDocument("Unnamed")',
            '# Gui.SendMsgToActiveView("ViewFit")',
            "### End command Std_Open",
            "",
          ].map((line, i) => (
            <div key={i} className="-ml-[6px] h-[18.8px] whitespace-pre">
              <span className="text-[#c4c4c4]">{">>> "}</span>
              {line}
            </div>
          ))}
        </div>
        {/* status bar */}
        <div className="relative flex h-[39px] shrink-0 items-center bg-[#303030] text-white">
          <span className="-ml-[15px] text-[12.25px] whitespace-nowrap">Preselected: Unnamed.heart. (10.53 mm, -19.24 mm, 10.00 mm)</span>
          <div className="ml-auto flex h-full items-end gap-[8px] pb-[3px] pr-[24px]">
            <div className="flex h-[24px] w-[111px] rounded-[3px] border border-black bg-[#262626] pl-[3px]">
              <div className="mt-[8px] h-[8px] w-[16px] bg-[#3f74b5]" />
            </div>
            <div className="flex h-[24px] w-[112px] items-center justify-center gap-[10px] rounded-[3px] border border-black bg-[#262626] text-[#ddd]">
              <div className="h-[13px] w-[13px] rounded-full border-2 border-[#ddd]" />
              CAD
            </div>
            <div className="flex h-[24px] w-[154px] items-center justify-center rounded-[3px] border border-black bg-[#262626] text-[#eee]">56.00 mm x 85.75 mm</div>
          </div>
        </div>
        <div className="h-[2px] shrink-0 bg-[#9a9a9a]" />
      </div>
      {/* what sticks out beside the notification */}
      <svg viewBox="0 0 12 12" className="absolute left-[1896px] top-[878px] h-3 w-3">
        <path d="M1 1L11 11M11 1L1 11" stroke="#626262" strokeWidth="1.6" />
      </svg>
      <div className="absolute left-[1899px] top-[895px] flex h-[83px] w-[9px] flex-col border border-[#222] bg-[#2b2b2b]">
        <div className="mt-[16px] h-[37px] bg-[#232323]" />
        <div className="h-[10px] bg-[#5a5a5a]" />
      </div>
      <Toast />
    </div>
  );
}
